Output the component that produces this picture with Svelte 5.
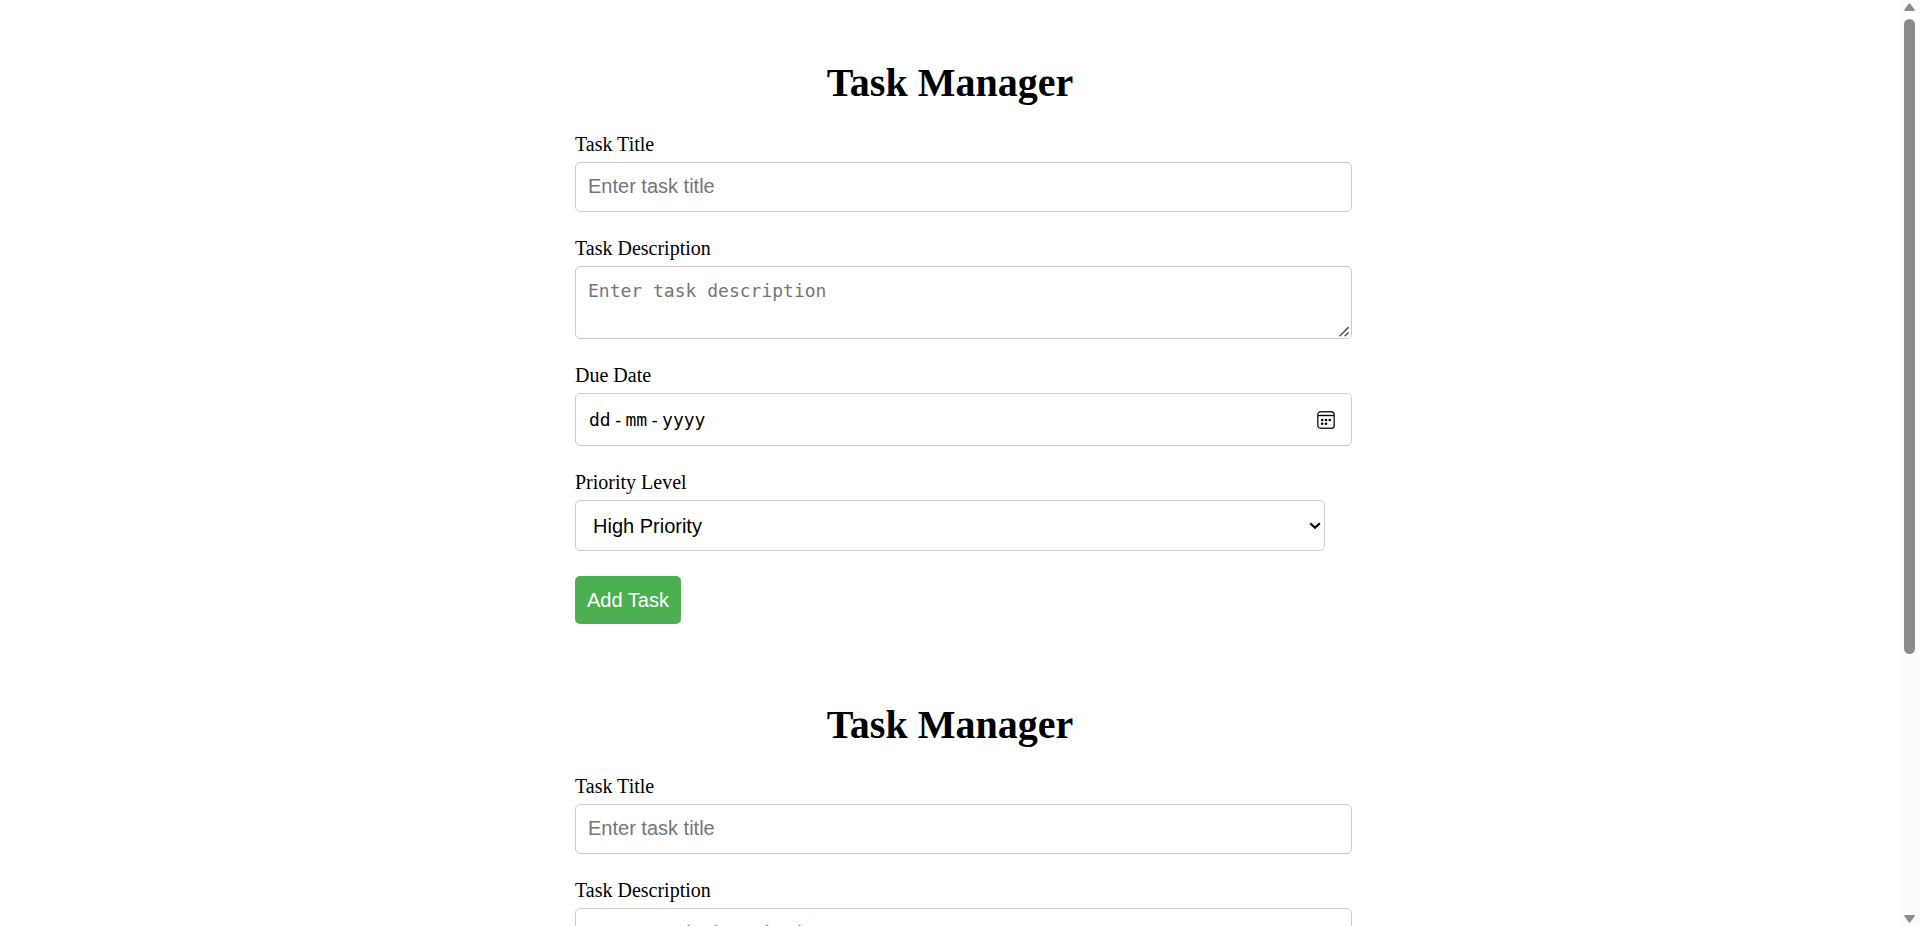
<script>
  let forms = $state([
    { id: 'first', title: '', description: '', due: '', priority: 'High Priority' },
    { id: 'second', title: '', description: '', due: '', priority: 'High Priority' }
  ]);
  const priorities = ['High Priority', 'Medium Priority', 'Low Priority'];

  function reset(event, form) {
    event.preventDefault();
    form.title = '';
    form.description = '';
    form.due = '';
  }
</script>

<main class="page">
  {#each forms as form (form.id)}
    <form class="task-form" onsubmit={(event) => reset(event, form)}>
      <h1>Task Manager</h1>

      <div class="field">
        <label for="{form.id}-title">Task Title</label>
        <input id="{form.id}-title" class="control wide" type="text" placeholder="Enter task title" bind:value={form.title} />
      </div>

      <div class="field">
        <label for="{form.id}-description">Task Description</label>
        <div class="holder wide">
          <textarea id="{form.id}-description" class="control mono" rows="2" placeholder="Enter task description" bind:value={form.description}></textarea>
          <svg class="grip" viewBox="0 0 14 13" aria-hidden="true">
            <rect width="13" height="12" fill="#fff" />
            <path d="M2.5 11.3L11.7 2.1M7.6 11.3L11.7 7.2" fill="none" stroke="#555" stroke-width="1.5" />
          </svg>
        </div>
      </div>

      <div class="field">
        <label for="{form.id}-due">Due Date</label>
        <div class="holder wide">
          <input id="{form.id}-due" class="control date mono" class:empty={!form.due} type="date" bind:value={form.due} />
          {#if !form.due}
            <div class="date-hint mono" aria-hidden="true">
              <span>dd</span><span>-</span><span>mm</span><span>-</span><span>yyyy</span>
            </div>
          {/if}
          <svg class="calendar" viewBox="0 0 18 18" aria-hidden="true">
            <rect x="0.8" y="0.8" width="16.4" height="16.4" rx="2.8" fill="none" stroke="#222" stroke-width="1.4" />
            <path d="M1 4.5H17" stroke="#000" stroke-width="1.4" />
            <circle cx="5.2" cy="9" r="1.3" />
            <circle cx="9" cy="9" r="1.3" />
            <circle cx="12.8" cy="9" r="1.3" />
            <circle cx="5.2" cy="12.7" r="1.3" />
            <circle cx="9" cy="12.7" r="1.3" />
          </svg>
        </div>
      </div>

      <div class="field">
        <label for="{form.id}-priority">Priority Level</label>
        <div class="holder">
          <select id="{form.id}-priority" class="control" bind:value={form.priority}>
            {#each priorities as priority}
              <option>{priority}</option>
            {/each}
          </select>
          <svg class="arrow" viewBox="0 0 12 8" aria-hidden="true">
            <path d="M1.2 1.2L6 5.8L10.8 1.2" fill="none" stroke="#000" stroke-width="2.2" />
          </svg>
        </div>
      </div>

      <button type="submit">Add Task</button>
    </form>
  {/each}
</main>

<div class="scrollbar" aria-hidden="true">
  <svg viewBox="0 0 11 8"><path d="M4.6 0.9Q5.5 -0.4 6.4 0.9L10.7 6.8Q11 8 10 8H1Q0 8 0.3 6.8Z" /></svg>
  <div class="track"><div class="thumb"></div></div>
  <svg viewBox="0 0 11 8"><path d="M4.6 7.1Q5.5 8.4 6.4 7.1L10.7 1.2Q11 0 10 0H1Q0 0 0.3 1.2Z" /></svg>
</div>

<style>
  :global(html) {
    scrollbar-width: none;
  }

  :global(body) {
    background: #fff;
  }

  .page {
    padding: 10px 20px 10px 0;
    color: #000;
    font-family: 'Liberation Serif', serif;
    font-size: 20px;
    line-height: 23px;
  }

  .task-form {
    max-width: 750px;
    margin: 0 auto;
    padding: 52px 0 28px;
  }

  h1 {
    margin: 0 0 30px;
    font-size: 40px;
    line-height: 41px;
    text-align: center;
  }

  .field {
    margin-bottom: 25px;
  }

  label {
    display: block;
    margin-bottom: 6px;
  }

  .control {
    display: block;
    box-sizing: border-box;
    width: 100%;
    margin: 0;
    padding: 12px 12px 14px;
    border: 1px solid #ccc;
    border-radius: 5px;
    background: #fff;
    color: #000;
    font-family: 'Liberation Sans', sans-serif;
    font-size: 20px;
    line-height: 22px;
  }

  .control::placeholder {
    color: #757575;
  }

  .wide {
    width: calc(100% + 27px);
  }

  input.control {
    height: 50px;
  }

  .mono {
    font-family: 'DejaVu Sans Mono', monospace;
    font-size: 18px;
  }

  textarea.control {
    height: 73px;
    padding: 13px 12px;
    resize: vertical;
  }

  .holder {
    position: relative;
  }

  .grip {
    position: absolute;
    right: 1px;
    bottom: 1px;
    width: 14px;
    height: 13px;
    pointer-events: none;
  }

  input.date {
    height: 53px;
  }

  .date.empty::-webkit-datetime-edit {
    opacity: 0;
  }

  .date::-webkit-calendar-picker-indicator {
    opacity: 0;
  }

  .date-hint {
    position: absolute;
    inset: 0 auto 0 14px;
    display: flex;
    align-items: center;
    gap: 2px;
    pointer-events: none;
  }

  .calendar {
    position: absolute;
    top: 18px;
    right: 17px;
    width: 18px;
    height: 18px;
    pointer-events: none;
  }

  select.control {
    height: 51px;
    padding: 0 32px 0 17px;
    appearance: none;
  }

  .arrow {
    position: absolute;
    top: 22px;
    right: 4px;
    width: 12px;
    height: 8px;
    pointer-events: none;
  }

  button {
    display: block;
    padding: 13px 12px;
    border: 0;
    border-radius: 5px;
    background: #4caf50;
    color: #fff;
    font-family: 'Liberation Sans', sans-serif;
    font-size: 20px;
    line-height: 22px;
    cursor: pointer;
  }

  .scrollbar {
    position: fixed;
    inset: 0 0 0 auto;
    box-sizing: border-box;
    width: 21px;
    padding: 3px 5px;
    display: flex;
    flex-direction: column;
    gap: 8px;
    background: #fcfcfc;
  }

  .scrollbar svg {
    width: 11px;
    height: 8px;
    fill: #8b8b8b;
  }

  .track {
    flex: 1;
  }

  .thumb {
    height: 71.5%;
    border-radius: 6px;
    background: #8b8b8b;
  }
</style>
